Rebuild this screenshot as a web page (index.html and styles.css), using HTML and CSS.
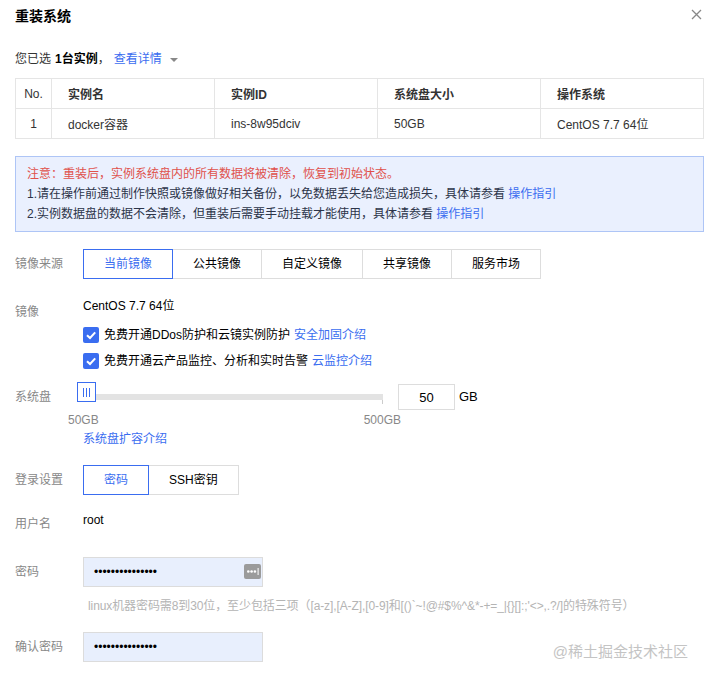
FILE: index.html
```html
<!DOCTYPE html>
<html lang="zh-CN">
<head>
    <meta charset="UTF-8">
    <meta name="viewport" content="width=device-width, initial-scale=1.0">
    <title>重装系统</title>
    <link rel="stylesheet" href="styles.css">
</head>
<body>

<div class="dialog">
    <div class="dialog-head">
        <h3>重装系统</h3>
        <span class="close">
            <svg width="11" height="11" viewBox="0 0 11 11"><path d="M1 1 L10 10 M10 1 L1 10" stroke="#888" stroke-width="1.3" fill="none"/></svg>
        </span>
    </div>

    <div class="selected">您已选 <b>1台实例</b>，<a href="#" class="link detail">查看详情</a><span class="caret"></span></div>

    <table class="ins-table">
        <tr>
            <th class="no">No.</th>
            <th>实例名</th>
            <th>实例ID</th>
            <th>系统盘大小</th>
            <th>操作系统</th>
        </tr>
        <tr>
            <td class="no">1</td>
            <td>docker容器</td>
            <td>ins-8w95dciv</td>
            <td>50GB</td>
            <td>CentOS 7.7 64位</td>
        </tr>
    </table>

    <div class="notice">
        <p class="warn">注意：重装后，实例系统盘内的所有数据将被清除，恢复到初始状态。</p>
        <p>1.请在操作前通过制作快照或镜像做好相关备份，以免数据丢失给您造成损失，具体请参看 <a href="#" class="link">操作指引</a></p>
        <p>2.实例数据盘的数据不会清除，但重装后需要手动挂载才能使用，具体请参看 <a href="#" class="link">操作指引</a></p>
    </div>

    <div class="form-row row-source">
        <label>镜像来源</label>
        <div class="seg">
            <span class="seg-item active">当前镜像</span>
            <span class="seg-item">公共镜像</span>
            <span class="seg-item">自定义镜像</span>
            <span class="seg-item">共享镜像</span>
            <span class="seg-item">服务市场</span>
        </div>
    </div>

    <div class="form-row row-image">
        <label>镜像</label>
        <div class="field">
            <div class="image-name">CentOS 7.7 64位</div>
            <div class="check-line">
                <span class="checkbox"><svg width="16" height="16" viewBox="0 0 16 16"><path d="M4 8.2 L7 11 L12.2 5.3" stroke="#fff" stroke-width="2" fill="none"/></svg></span>
                免费开通DDos防护和云镜实例防护 <a href="#" class="link">安全加固介绍</a>
            </div>
            <div class="check-line">
                <span class="checkbox"><svg width="16" height="16" viewBox="0 0 16 16"><path d="M4 8.2 L7 11 L12.2 5.3" stroke="#fff" stroke-width="2" fill="none"/></svg></span>
                免费开通云产品监控、分析和实时告警 <a href="#" class="link">云监控介绍</a>
            </div>
        </div>
    </div>

    <div class="form-row row-disk">
        <label>系统盘</label>
        <div class="field">
            <div class="slider-line">
                <div class="slider">
                    <div class="track"></div>
                    <span class="handle"></span>
                </div>
                <input class="size-input" type="text" value="50">
                <span class="unit">GB</span>
            </div>
            <div class="scale">
                <span>50GB</span>
                <span>500GB</span>
            </div>
            <a href="#" class="link disk-link">系统盘扩容介绍</a>
        </div>
    </div>

    <div class="form-row row-login">
        <label>登录设置</label>
        <div class="seg">
            <span class="seg-item active">密码</span>
            <span class="seg-item">SSH密钥</span>
        </div>
    </div>

    <div class="form-row row-user">
        <label>用户名</label>
        <div class="field user-name">root</div>
    </div>

    <div class="form-row row-pwd">
        <label>密码</label>
        <div class="pwd-box">
            <input class="pwd-input" type="password" value="abcdefghijklmno">
            <span class="pwd-key">
                <svg width="17" height="15" viewBox="0 0 17 15"><rect x="0" y="0" width="17" height="15" rx="2" fill="#9b9b9b"/><circle cx="4.3" cy="7.5" r="1.3" fill="#fff"/><circle cx="7.6" cy="7.5" r="1.3" fill="#fff"/><circle cx="10.9" cy="7.5" r="1.3" fill="#fff"/><rect x="13.6" y="4" width="1" height="7" fill="#fff"/></svg>
            </span>
        </div>
    </div>
    <div class="hint">linux机器密码需8到30位，至少包括三项（[a-z],[A-Z],[0-9]和[()`~!@#$%^&amp;*-+=_|{}[]:;'&lt;&gt;,.?/]的特殊符号）</div>

    <div class="form-row row-confirm">
        <label>确认密码</label>
        <div class="pwd-box">
            <input class="pwd-input" type="password" value="abcdefghijklmno">
        </div>
    </div>
</div>

<div class="watermark">@稀土掘金技术社区</div>

</body>
</html>
```

FILE: styles.css
```css
body {
    margin: 0;
    padding: 0;
    background-color: #fff;
    font-family: "Liberation Sans", "Noto Sans CJK SC", sans-serif;
    font-size: 12px;
    color: #333;
}
.dialog {
    padding: 0 2px 0 15px;
}
.dialog-head {
    display: flex;
    justify-content: space-between;
    align-items: center;
    height: 30px;
}
.dialog-head h3 {
    margin: 0;
    font-size: 14px;
    font-weight: bold;
    color: #000;
}
.close {
    display: block;
    margin-right: 2px;
    height: 11px;
    margin-top: -1px;
}
.close svg {
    display: block;
}
.link {
    color: #3a6df0;
    text-decoration: none;
}
.selected {
    margin-top: 19px;
    line-height: 20px;
    display: flex;
    align-items: center;
}
.selected b {
    margin-left: 4px;
    color: #000;
}
.selected .detail {
    margin-left: 4px;
}
.caret {
    margin-left: 8px;
    margin-top: 2px;
    width: 0;
    height: 0;
    border-left: 4px solid transparent;
    border-right: 4px solid transparent;
    border-top: 4px solid #888;
}
.ins-table {
    margin-top: 9px;
    width: 100%;
    border-collapse: collapse;
    table-layout: fixed;
}
.ins-table th, .ins-table td {
    border: 1px solid #e5e5e5;
    height: 29px;
    padding: 0 0 0 16px;
    text-align: left;
    color: #333;
    font-size: 12px;
}
.ins-table th {
    font-weight: bold;
}
.ins-table .no {
    width: 35px;
    padding: 0;
    text-align: center;
    font-weight: normal;
}
.notice {
    margin-top: 17px;
    padding: 7px 11px;
    background-color: #eaf0fe;
    border: 1px solid #aec5f6;
}
.notice p {
    margin: 0;
    line-height: 20px;
    color: #2c3449;
}
.notice .warn {
    color: #e0514b;
}
.form-row {
    display: flex;
    align-items: flex-start;
}
.form-row label {
    width: 68px;
    flex-shrink: 0;
    line-height: 30px;
    color: #888;
}
.row-source {
    margin-top: 17px;
}
.seg {
    display: flex;
}
.seg-item {
    height: 28px;
    line-height: 28px;
    padding: 0 20px;
    border: 1px solid #ddd;
    border-left: none;
    color: #000;
}
.seg-item:first-child {
    border-left: 1px solid #ddd;
}
.seg-item.active {
    border: 1px solid #3a6df0;
    color: #3a6df0;
}
.seg-item.active + .seg-item {
    border-left: none;
}
.row-image {
    margin-top: 18px;
}
.image-name {
    line-height: 18px;
    color: #000;
}
.check-line {
    display: flex;
    align-items: center;
    line-height: 26px;
    color: #000;
}
.image-name + .check-line {
    margin-top: 7px;
}
.check-line .link {
    margin-left: 4px;
}
.checkbox {
    display: block;
    width: 16px;
    height: 16px;
    margin-right: 5px;
    background-color: #3a6df0;
    border-radius: 2px;
}
.checkbox svg {
    display: block;
}
.row-disk {
    margin-top: 8px;
}
.slider-line {
    display: flex;
    align-items: flex-start;
    height: 28px;
}
.slider {
    position: relative;
    width: 300px;
    height: 28px;
    margin-right: 15px;
}
.track {
    margin-top: 12px;
    height: 6px;
    background-color: #e3e3e3;
    position: relative;
}
.track::after {
    content: "";
    position: absolute;
    right: 0;
    top: 6px;
    width: 1px;
    height: 4px;
    background-color: #ccc;
}
.handle {
    position: absolute;
    left: -6px;
    top: 0;
    width: 17px;
    height: 18px;
    border: 1px solid #3a6df0;
    background-color: #fff;
}
.handle::before {
    content: "";
    position: absolute;
    left: 5px;
    top: 5px;
    width: 1px;
    height: 9px;
    background-color: #3a6df0;
    box-shadow: 3px 0 0 #3a6df0, 6px 0 0 #3a6df0;
}
.size-input {
    margin-top: 2px;
    width: 57px;
    height: 26px;
    box-sizing: border-box;
    border: 1px solid #ddd;
    text-align: center;
    font-family: inherit;
    font-size: 13px;
    color: #000;
    padding: 0;
    outline: none;
}
.unit {
    margin-left: 4px;
    line-height: 30px;
    font-size: 13px;
    color: #000;
}
.scale {
    display: flex;
    justify-content: space-between;
    width: 333px;
    margin-top: 2px;
    margin-left: -15px;
    line-height: 16px;
    color: #888;
}
.disk-link {
    display: block;
    margin-top: 1px;
    line-height: 20px;
}
.row-login {
    margin-top: 16px;
}
.row-user {
    margin-top: 14px;
}
.user-name {
    padding-top: 2px;
    line-height: 18px;
    color: #000;
}
.row-pwd {
    margin-top: 18px;
}
.pwd-box {
    position: relative;
    width: 180px;
    height: 30px;
}
.pwd-input {
    width: 180px;
    height: 30px;
    box-sizing: border-box;
    border: 1px solid #dcdcdc;
    background-color: #e8effd;
    padding: 0 10px;
    font-family: "Liberation Sans", sans-serif;
    font-size: 12px;
    color: #000;
    outline: none;
}
.pwd-key {
    position: absolute;
    right: 2px;
    top: 7px;
}
.pwd-key svg {
    display: block;
}
.hint {
    margin-top: 10px;
    padding-left: 73px;
    line-height: 18px;
    color: #b4b4b4;
    white-space: nowrap;
    letter-spacing: -0.1px;
}
.row-confirm {
    margin-top: 17px;
}
.watermark {
    position: absolute;
    right: 18px;
    top: 641px;
    font-size: 15px;
    line-height: 22px;
    color: #c4c4c4;
}
```
